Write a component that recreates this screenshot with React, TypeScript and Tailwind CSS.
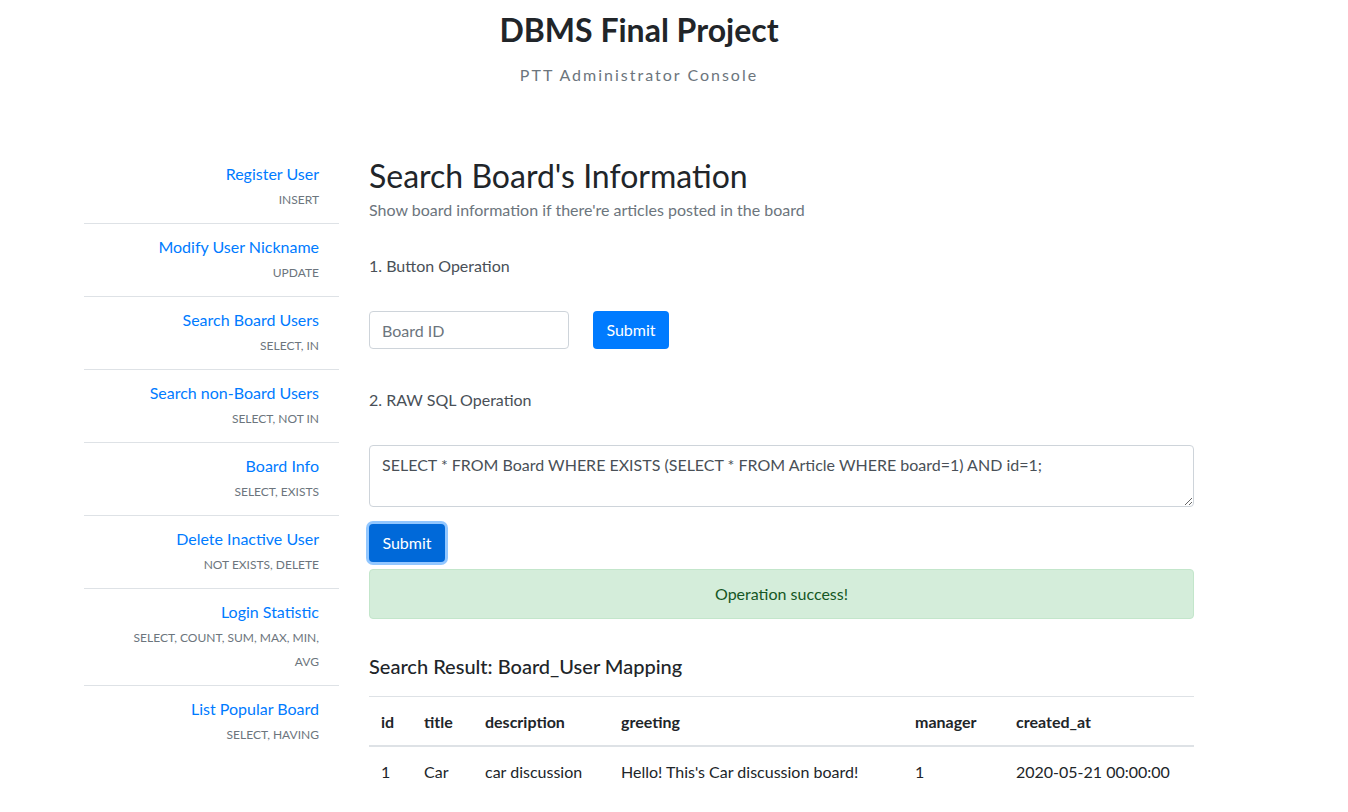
const menu = [
  { title: "Register User", ops: ["INSERT"] },
  { title: "Modify User Nickname", ops: ["UPDATE"] },
  { title: "Search Board Users", ops: ["SELECT, IN"] },
  { title: "Search non-Board Users", ops: ["SELECT, NOT IN"] },
  { title: "Board Info", ops: ["SELECT, EXISTS"] },
  { title: "Delete Inactive User", ops: ["NOT EXISTS, DELETE"] },
  { title: "Login Statistic", ops: ["SELECT, COUNT, SUM, MAX, MIN,", "AVG"] },
  { title: "List Popular Board", ops: ["SELECT, HAVING"] },
];

const columns = [
  { key: "id", w: "w-[43px]" },
  { key: "title", w: "w-[61px]" },
  { key: "description", w: "w-[136px]" },
  { key: "greeting", w: "w-[294px]" },
  { key: "manager", w: "w-[101px]" },
  { key: "created_at", w: "w-[190px]" },
];

const rows = [
  ["1", "Car", "car discussion", "Hello! This's Car discussion board!", "1", "2020-05-21 00:00:00"],
];

export default function App() {
  return (
    <div className="min-h-screen bg-white font-['Lato',sans-serif] text-[#212529]">
      <div className="ml-[84px] w-[1110px]">
        <header className="pt-[11px] text-center">
          <h1 className="text-[32px] font-bold leading-[38px]">DBMS Final Project</h1>
          <p className="mt-[14px] text-base leading-6 tracking-[2px] text-[#6c757d]">
            PTT Administrator Console
          </p>
        </header>

        <div className="mt-[64px] flex gap-[30px]">
          <nav className="w-[255px] shrink-0">
            {menu.map((m, i) => (
              <div
                key={m.title}
                className={
                  "px-5 pt-[11px] pb-[11px] text-right " +
                  (i < menu.length - 1 ? "border-b border-[#dee2e6]" : "")
                }
              >
                <a href="#" className="block text-base leading-6 text-[#007bff]">
                  {m.title}
                </a>
                {m.ops.map((o, k) => (
                  <div
                    key={o}
                    className={"text-xs leading-6 text-[#6c757d] " + (k === 0 ? "mt-[2px]" : "")}
                  >
                    {o}
                  </div>
                ))}
              </div>
            ))}
          </nav>

          <main className="w-[825px] pt-[6px]">
            <h2 className="text-[32px] font-normal leading-[38px]">Search Board's Information</h2>
            <p className="mt-[3px] text-base leading-6 text-[#6c757d]">
              Show board information if there're articles posted in the board
            </p>

            <p className="mt-8 text-base leading-6 text-[#495057]">1. Button Operation</p>
            <div className="mt-[33px] flex items-center gap-6">
              <input
                type="text"
                placeholder="Board ID"
                className="h-[38px] w-[200px] rounded border border-[#ced4da] px-3 text-base text-[#495057] placeholder:text-[#6c757d] focus:outline-none"
              />
              <button className="h-[38px] w-[76px] rounded bg-[#007bff] text-base text-white">
                Submit
              </button>
            </div>

            <p className="mt-[39px] text-base leading-6 text-[#495057]">2. RAW SQL Operation</p>
            <textarea
              defaultValue="SELECT * FROM Board WHERE EXISTS (SELECT * FROM Article WHERE board=1) AND id=1;"
              className="mt-[33px] block h-[62px] w-full rounded border border-[#ced4da] px-3 py-[7px] text-base leading-6 text-[#495057] focus:outline-none"
            />
            <button className="mt-[17px] h-[38px] w-[76px] rounded bg-[#0069d9] text-base text-white shadow-[0_0_0_3px_rgba(38,143,255,0.5)]">
              Submit
            </button>

            <div className="mt-[7px] flex h-[50px] items-center justify-center rounded border border-[#c3e6cb] bg-[#d4edda] text-base text-[#155724]">
              Operation success!
            </div>

            <h5 className="mt-[35px] text-xl font-medium leading-6">Search Result: Board_User Mapping</h5>

            <table className="mt-[18px] w-full table-fixed border-collapse text-base">
              <thead>
                <tr className="border-t border-[#dee2e6]">
                  {columns.map((c) => (
                    <th
                      key={c.key}
                      className={c.w + " border-b-2 border-[#dee2e6] px-3 pt-[13px] pb-[11px] text-left font-bold leading-6"}
                    >
                      {c.key}
                    </th>
                  ))}
                </tr>
              </thead>
              <tbody>
                {rows.map((r, i) => (
                  <tr key={i}>
                    {r.map((v, j) => (
                      <td key={j} className="px-3 pt-[13px] pb-[11px] leading-6">
                        {v}
                      </td>
                    ))}
                  </tr>
                ))}
              </tbody>
            </table>
          </main>
        </div>
      </div>
    </div>
  );
}
